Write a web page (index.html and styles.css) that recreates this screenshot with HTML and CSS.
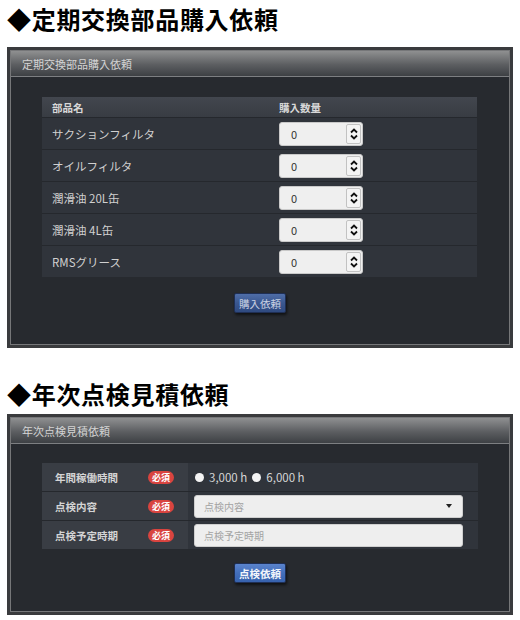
FILE: index.html
```html
<!DOCTYPE html>
<html lang="ja">
<head>
<meta charset="utf-8">
<link rel="stylesheet" href="styles.css">
</head>
<body>
<h2 class="title first">◆定期交換部品購入依頼</h2>
<div class="panel p1">
  <div class="panel-inner">
    <div class="panel-head">定期交換部品購入依頼</div>
    <div class="panel-body">
      <div class="parts">
        <div class="prow phead"><div class="c1">部品名</div><div class="c2">購入数量</div></div>
        <div class="prow"><div class="c1">サクションフィルタ</div><div class="c2"><div class="num"><span class="val">0</span><span class="spin"><svg viewBox="0 0 10 14" width="10" height="14"><path d="M2 5.5 L5 2.5 L8 5.5 M2 8.5 L5 11.5 L8 8.5" fill="none" stroke="#111" stroke-width="1.8"/></svg></span></div></div></div>
        <div class="prow"><div class="c1">オイルフィルタ</div><div class="c2"><div class="num"><span class="val">0</span><span class="spin"><svg viewBox="0 0 10 14" width="10" height="14"><path d="M2 5.5 L5 2.5 L8 5.5 M2 8.5 L5 11.5 L8 8.5" fill="none" stroke="#111" stroke-width="1.8"/></svg></span></div></div></div>
        <div class="prow"><div class="c1">潤滑油 20L缶</div><div class="c2"><div class="num"><span class="val">0</span><span class="spin"><svg viewBox="0 0 10 14" width="10" height="14"><path d="M2 5.5 L5 2.5 L8 5.5 M2 8.5 L5 11.5 L8 8.5" fill="none" stroke="#111" stroke-width="1.8"/></svg></span></div></div></div>
        <div class="prow"><div class="c1">潤滑油 4L缶</div><div class="c2"><div class="num"><span class="val">0</span><span class="spin"><svg viewBox="0 0 10 14" width="10" height="14"><path d="M2 5.5 L5 2.5 L8 5.5 M2 8.5 L5 11.5 L8 8.5" fill="none" stroke="#111" stroke-width="1.8"/></svg></span></div></div></div>
        <div class="prow"><div class="c1">RMSグリース</div><div class="c2"><div class="num"><span class="val">0</span><span class="spin"><svg viewBox="0 0 10 14" width="10" height="14"><path d="M2 5.5 L5 2.5 L8 5.5 M2 8.5 L5 11.5 L8 8.5" fill="none" stroke="#111" stroke-width="1.8"/></svg></span></div></div></div>
      </div>
      <div class="btn-row"><button class="btn btn1">購入依頼</button></div>
    </div>
  </div>
</div>

<h2 class="title second">◆年次点検見積依頼</h2>
<div class="panel p2">
  <div class="panel-inner">
    <div class="panel-head">年次点検見積依頼</div>
    <div class="panel-body">
      <div class="form">
        <div class="frow">
          <div class="lab"><span>年間稼働時間</span><span class="req">必須</span></div>
          <div class="fval radios">
            <span class="radio"></span><span class="rtext">3,000 h</span>
            <span class="radio"></span><span class="rtext">6,000 h</span>
          </div>
        </div>
        <div class="frow">
          <div class="lab"><span>点検内容</span><span class="req">必須</span></div>
          <div class="fval"><div class="field select"><span class="ph">点検内容</span><span class="caret"></span></div></div>
        </div>
        <div class="frow">
          <div class="lab"><span>点検予定時期</span><span class="req">必須</span></div>
          <div class="fval"><div class="field"><span class="ph">点検予定時期</span></div></div>
        </div>
      </div>
      <div class="btn-row"><button class="btn btn2">点検依頼</button></div>
    </div>
  </div>
</div>
</body>
</html>
```
FILE: styles.css
```css
* { box-sizing: border-box; }
html, body { margin: 0; padding: 0; background: #fff; }
body {
  width: 520px;
  font-family: "Noto Sans CJK JP", "Noto Sans", sans-serif;
  color: #ccc;
}
.title {
  margin: 0 0 0 7px;
  font-size: 24px;
  line-height: 29px;
  font-weight: bold;
  color: #000;
  letter-spacing: 0.7px;
}
.title.first { margin-top: 4px; }
.title.second { margin-top: 31px; }
.panel {
  margin-left: 7px;
  width: 506px;
  background: #3a3b3d;
  padding: 3px;
}
.p1 { margin-top: 14px; }
.p2 { margin-top: 6px; }
.panel-inner {
  border: 1px solid #767779;
  background: #272a2f;
}
.panel-head {
  height: 26px;
  background: linear-gradient(#8f9091, #5c5e61 55%, #3d4044);
  border-bottom: 1px solid #7d7f82;
  font-size: 11px;
  line-height: 26px;
  padding-left: 11px;
  color: #d4d4d4;
}
.panel-body { padding: 19px 31px 0 31px; }
.p1 .panel-body { padding-top: 20px; padding-bottom: 31px; }
.p2 .panel-body { padding-bottom: 28px; }

.parts { width: 435px; }
.prow {
  display: flex;
  height: 32px;
  background: #30343b;
  border-top: 1px solid #25282d;
  align-items: center;
  font-size: 11.5px;
  color: #d0d0d0;
}
.prow.phead {
  height: 20px;
  border-top: none;
  background: linear-gradient(#42464e, #383c43);
  font-size: 10.5px;
  font-weight: bold;
  color: #d8d8d8;
}
.c1 { width: 227px; padding-left: 10px; }
.c2 { padding-left: 10px; }
.num {
  width: 84px;
  height: 24px;
  background: #efefef;
  border: 1px solid #c9c9c9;
  border-radius: 3px;
  display: flex;
  align-items: center;
  justify-content: space-between;
  padding: 0 1px 0 11px;
  color: #333;
  font-size: 11px;
}
.spin {
  width: 15px;
  height: 20px;
  border: 1px solid #c2c2c2;
  border-radius: 2px;
  background: #f4f4f4;
  display: flex;
  align-items: center;
  justify-content: center;
}
.spin svg { display: block; }

.btn-row { display: flex; justify-content: center; }
.btn {
  font-family: "Noto Sans CJK JP", sans-serif;
  border: 1px solid #1f2f55;
  border-radius: 2px;
  box-shadow: 1px 2px 3px rgba(0,0,0,0.6);
  padding: 0;
  font-size: 10.5px;
  cursor: pointer;
}
.btn1 {
  margin-top: 16px;
  width: 52px;
  height: 20px;
  background: linear-gradient(#4f6ea8, #3a5790 50%, #2f4a80);
  color: #c9d2e3;
}
.btn2 {
  margin-top: 14px;
  width: 52px;
  height: 20px;
  background: linear-gradient(#5a83cc, #436fbc 50%, #3762ad);
  color: #f2f5fb;
  font-weight: bold;
}

.form { width: 436px; }
.frow {
  display: flex;
  height: 29px;
  border-top: 1px solid #25282d;
}
.frow:first-child { border-top: none; height: 28px; }
.lab {
  width: 146px;
  background: #393d44;
  display: flex;
  align-items: center;
  justify-content: space-between;
  padding: 0 14px 0 13px;
  font-size: 10.5px;
  font-weight: bold;
  color: #d4d4d4;
}
.req {
  background: #d9443f;
  color: #fff;
  font-size: 9px;
  border-radius: 7px;
  width: 26px;
  height: 13px;
  line-height: 13px;
  text-align: center;
}
.fval {
  flex: 1;
  background: #30343b;
  display: flex;
  align-items: center;
  padding-left: 6px;
}
.radios { font-size: 11.5px; color: #d6d6d6; padding-left: 7px; }
.radio {
  width: 9px;
  height: 9px;
  border-radius: 50%;
  background: #f4f4f4;
  margin-right: 5px;
}
.rtext { margin-right: 5px; }
.field {
  width: 269px;
  height: 23px;
  background: #eeeeee;
  border: 1px solid #cfcfcf;
  border-radius: 3px;
  display: flex;
  align-items: center;
  justify-content: space-between;
  padding: 0 10px 0 9px;
  font-size: 10px;
}
.ph { color: #a3a3a3; }
.caret {
  width: 0;
  height: 0;
  border-left: 3.5px solid transparent;
  border-right: 3.5px solid transparent;
  border-top: 4px solid #222;
}
```
